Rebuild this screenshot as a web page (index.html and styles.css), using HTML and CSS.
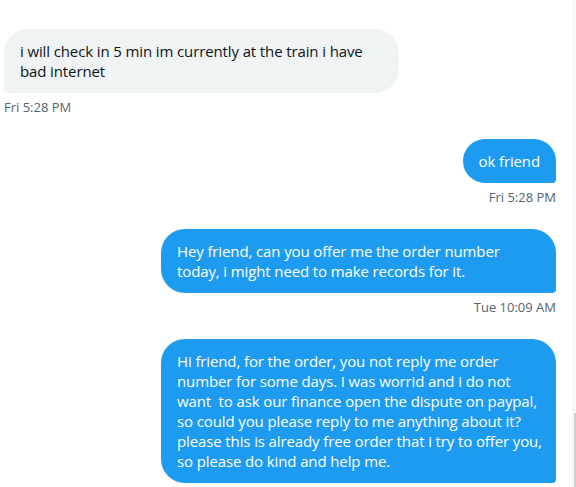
FILE: index.html
```html
<!DOCTYPE html>
<html lang="en">
<head>
<meta charset="utf-8">
<title>Messages</title>
<link rel="stylesheet" href="styles.css">
</head>
<body>
<div class="app">
  <main class="thread">
    <div class="msg received">
      <div class="bubble wide">i will check in 5 min im currently at the train i have<br>bad internet</div>
      <div class="time">Fri 5:28 PM</div>
    </div>
    <div class="msg sent">
      <div class="bubble">ok friend</div>
      <div class="time">Fri 5:28 PM</div>
    </div>
    <div class="msg sent">
      <div class="bubble wide">Hey friend, can you offer me the order number<br>today, i might need to make records for it.</div>
      <div class="time">Tue 10:09 AM</div>
    </div>
    <div class="msg sent">
      <div class="bubble wide">Hi friend, for the order, you not reply me order<br>number for some days. I was worrid and i do not<br>want&nbsp; to ask our finance open the dispute on paypal,<br>so could you please reply to me anything about it?<br>please this is already free order that i try to offer you,<br>so please do kind and help me.</div>
    </div>
  </main>
  <div class="scrollbar"><div class="thumb"></div></div>
</div>
</body>
</html>
```

FILE: styles.css
```css
html, body {
  margin: 0;
  padding: 0;
  background: #ffffff;
}

body {
  font-family: "Open Sans", "Noto Sans", "Liberation Sans", sans-serif;
  color: #0f1419;
}

.app {
  display: flex;
  height: 487px;
  overflow: hidden;
}

.thread {
  flex: 1;
  display: flex;
  flex-direction: column;
  padding: 29px 16px 0 4px;
  overflow: hidden;
}

.msg {
  display: flex;
  flex-direction: column;
  margin-bottom: 24px;
}

.msg.received {
  align-items: flex-start;
}

.msg.sent {
  align-items: flex-end;
}

.bubble {
  font-size: 15px;
  line-height: 20px;
  letter-spacing: -0.12px;
  padding: 12px 16px;
  border-radius: 24px;
  white-space: nowrap;
  box-sizing: border-box;
  max-width: 395px;
}

.bubble.wide {
  width: 395px;
}

.received .bubble {
  background: #eff3f4;
  color: #0f1419;
  border-bottom-left-radius: 4px;
}

.sent .bubble {
  background: #1d9bf0;
  color: #ffffff;
  border-bottom-right-radius: 4px;
}

.time {
  font-size: 13px;
  line-height: 16px;
  padding-top: 6px;
  color: #536471;
}

.scrollbar {
  width: 4px;
  background: #f7f7f7;
  display: flex;
  flex-direction: column;
  align-items: flex-end;
}

.thumb {
  margin-top: auto;
  width: 2px;
  height: 74px;
  background: #cfcfcf;
}
```
